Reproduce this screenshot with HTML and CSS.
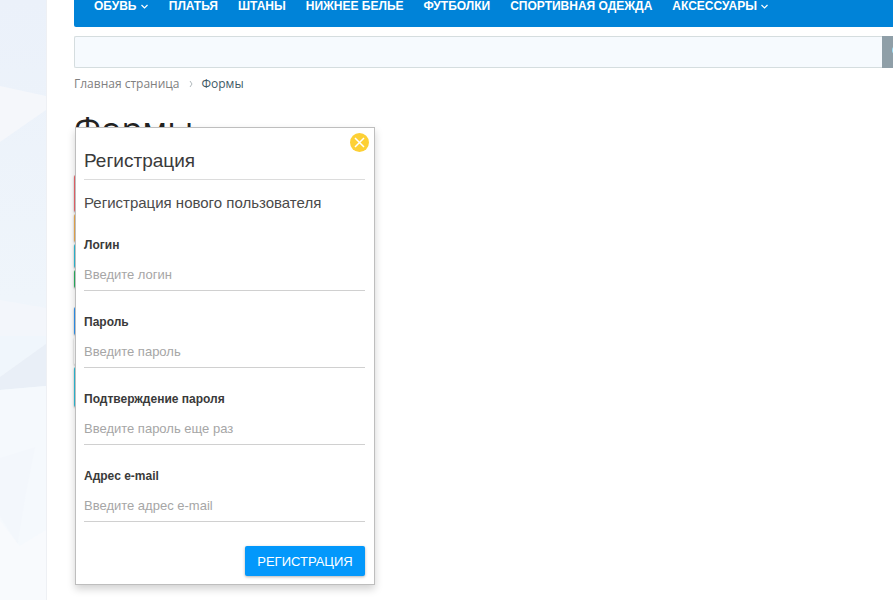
FILE: index.html
```
<!DOCTYPE html>
<html lang="ru">
<head>
    <meta charset="UTF-8">
    <meta name="viewport" content="width=device-width, initial-scale=1.0">
    <title>Формы</title>
    <link rel="stylesheet" href="styles.css">
</head>
<body>
    <div class="side">
        <svg class="side-bg" viewBox="0 0 47 600" preserveAspectRatio="none" aria-hidden="true">
            <defs>
                <linearGradient id="fade" x1="0" y1="0" x2="0" y2="1">
                    <stop offset="0" stop-color="#ebf1fa"/>
                    <stop offset="0.5" stop-color="#eff5fb"/>
                    <stop offset="1" stop-color="#f9fafd"/>
                </linearGradient>
            </defs>
            <rect width="47" height="600" fill="url(#fade)"/>
            <polygon points="0,86 47,96 47,110 0,142" fill="#f5f7fb"/>
            <polygon points="0,300 47,308 47,338 0,336" fill="#f3f6fb"/>
            <polygon points="0,336 47,336 47,344 0,376" fill="#f0f6fc"/>
            <polygon points="0,377 47,344 47,386 0,390" fill="#e9eff7"/>
            <polygon points="0,390 47,386 47,600 0,600" fill="#f5f9fd"/>
            <polygon points="0,458 36,447 26,496 18,544 0,516" fill="#f3f7fc"/>
            <polygon points="0,520 20,546 47,530 47,600 0,600" fill="#f8fafd"/>
        </svg>
    </div>
    <div class="page">
        <nav class="menu">
            <a href="#">ОБУВЬ <svg class="arrow" viewBox="0 0 8 6"><path d="M1 1l3 3 3-3"/></svg></a>
            <a href="#">ПЛАТЬЯ</a>
            <a href="#">ШТАНЫ</a>
            <a href="#">НИЖНЕЕ БЕЛЬЕ</a>
            <a href="#">ФУТБОЛКИ</a>
            <a href="#">СПОРТИВНАЯ ОДЕЖДА</a>
            <a href="#">АКСЕССУАРЫ <svg class="arrow" viewBox="0 0 8 6"><path d="M1 1l3 3 3-3"/></svg></a>
        </nav>
        <form class="search">
            <input type="text" aria-label="Поиск">
            <button type="button" aria-label="Найти">
                <svg viewBox="0 0 14 14"><circle cx="6" cy="6" r="5"/><path d="M10 10l3 3"/></svg>
            </button>
        </form>
        <div class="breadcrumbs">
            <a href="#">Главная страница</a>
            <svg class="crumb-arrow" viewBox="0 0 4 8"><path d="M1 1l2 3-2 3"/></svg>
            <span>Формы</span>
        </div>
        <main>
            <h1>Формы</h1>
            <div class="form-buttons">
                <button type="button" class="red" aria-label="Форма 1"></button>
                <button type="button" class="orange" aria-label="Форма 2"></button>
                <button type="button" class="teal" aria-label="Форма 3"></button>
                <button type="button" class="green" aria-label="Форма 4"></button>
                <button type="button" class="blue" aria-label="Форма 5"></button>
                <button type="button" class="white" aria-label="Форма 6"></button>
                <button type="button" class="teal large" aria-label="Форма 7"></button>
            </div>
        </main>

        <div class="modal" role="dialog" aria-labelledby="modal-title">
            <button type="button" class="close" aria-label="Закрыть">
                <svg viewBox="0 0 19 19"><path d="M5 5l9 9M14 5l-9 9"/></svg>
            </button>
            <h2 id="modal-title">Регистрация</h2>
            <p>Регистрация нового пользователя</p>
            <form>
                <div class="field">
                    <label for="login">Логин</label>
                    <input type="text" id="login" placeholder="Введите логин">
                </div>
                <div class="field">
                    <label for="password">Пароль</label>
                    <input type="password" id="password" placeholder="Введите пароль">
                </div>
                <div class="field">
                    <label for="confirm">Подтверждение пароля</label>
                    <input type="password" id="confirm" placeholder="Введите пароль еще раз">
                </div>
                <div class="field">
                    <label for="email">Адрес e-mail</label>
                    <input type="email" id="email" placeholder="Введите адрес e-mail">
                </div>
                <button type="submit" class="submit">РЕГИСТРАЦИЯ</button>
            </form>
        </div>
    </div>
</body>
</html>
```
FILE: styles.css
```
* {
    box-sizing: border-box;
}

body {
    margin: 0;
    display: flex;
    min-height: 100vh;
    overflow-x: hidden;
    background: #fff;
    font-family: "Open Sans", sans-serif;
}

a {
    text-decoration: none;
}

button {
    border: none;
    padding: 0;
    cursor: pointer;
}

svg {
    fill: none;
    stroke: currentColor;
}

.side {
    flex: 0 0 47px;
    border-right: 1px solid #eef0f4;
}

.side-bg {
    display: block;
    width: 100%;
    height: 100%;
    stroke: none;
}

.page {
    position: relative;
    flex: 1;
    min-width: 0;
    padding-left: 27px;
}

/* Top menu */
.menu {
    display: flex;
    gap: 20px;
    padding: 0 20px 15px;
    background: #0083d8;
    border-radius: 0 0 0 2px;
    white-space: nowrap;
}

.menu a {
    color: #fff;
    font-family: "Liberation Sans", sans-serif;
    font-size: 12px;
    font-weight: 700;
    line-height: 12px;
}

.arrow {
    width: 9px;
    height: 6px;
    stroke-width: 1.2;
}

/* Search */
.search {
    display: flex;
    height: 32px;
    margin-top: 9px;
    overflow: hidden;
}

.search input {
    flex: 1;
    min-width: 0;
    border: 1px solid #d5dddf;
    border-right: none;
    border-radius: 2px 0 0 2px;
    background: #f6fafe;
}

.search button {
    flex: 0 0 32px;
    margin-right: -21px;
    background: #8f9fa8;
    color: #9fe2fa;
}

.search svg {
    width: 12px;
    height: 12px;
    stroke-width: 2;
}

/* Breadcrumbs */
.breadcrumbs {
    display: flex;
    align-items: center;
    gap: 9px;
    margin-top: 6px;
    font-size: 12px;
    line-height: 20px;
    color: #3f5a66;
}

.breadcrumbs a {
    color: #808080;
}

.crumb-arrow {
    width: 4px;
    height: 8px;
    color: #b0b8bc;
}

h1 {
    margin: 11px 0 0;
    font-size: 34px;
    font-weight: 400;
    line-height: 48px;
    color: #222;
}

/* Buttons that open the forms */
.form-buttons {
    display: flex;
    flex-direction: column;
    align-items: flex-start;
    gap: 2px;
    margin-top: 22px;
}

.form-buttons button {
    width: 140px;
    height: 28px;
    border-radius: 2px;
    box-shadow: 0 1px 2px rgba(0, 0, 0, 0.3);
}

.form-buttons .red {
    height: 37px;
    background: #f0666c;
}

.form-buttons .orange {
    background: #f0ad4e;
}

.form-buttons .teal {
    height: 24px;
    background: #2bbfd9;
}

.form-buttons .green {
    height: 18px;
    background: #28b463;
}

.form-buttons .blue {
    margin-top: 17px;
    background: #2f96f3;
}

.form-buttons .white {
    background: #fff;
}

.form-buttons .large {
    height: 40px;
}

/* Registration window */
.modal {
    position: absolute;
    top: 127px;
    left: 28px;
    width: 300px;
    padding: 21px 9px 8px 8px;
    border: 1px solid #bebebe;
    background: #fff;
    box-shadow: 0 4px 8px rgba(0, 0, 0, 0.18);
    font-family: "Liberation Sans", Arial, sans-serif;
    color: #3a3a3a;
}

.close {
    position: absolute;
    top: 5px;
    right: 5px;
    width: 19px;
    height: 19px;
    border-radius: 50%;
    background: #fdd035;
    color: #fff;
}

.close svg {
    display: block;
    width: 19px;
    height: 19px;
    stroke-width: 1.5;
}

.modal h2 {
    margin: 0;
    padding-bottom: 6px;
    border-bottom: 1px solid #dcdcdc;
    font-size: 19px;
    font-weight: 400;
    line-height: 24px;
}

.modal p {
    margin: 11px 0 20px;
    font-size: 15px;
    line-height: 24px;
    color: #4a4a4a;
}

.field {
    margin-bottom: 21px;
}

.field label {
    display: block;
    font-size: 12px;
    font-weight: 700;
    line-height: 20px;
}

.field input {
    display: block;
    width: 100%;
    height: 31px;
    margin-top: 5px;
    padding: 0 0 2px;
    border: none;
    border-bottom: 1px solid #d0d0d0;
    background: none;
    font-family: inherit;
    font-size: 13px;
}

.field input::placeholder {
    color: #a6a6a6;
}

.submit {
    display: block;
    width: 120px;
    height: 30px;
    margin: 24px 0 0 auto;
    border-radius: 2px;
    background: #0398fb;
    box-shadow: 0 1px 3px rgba(0, 0, 0, 0.3);
    color: #fff;
    font-family: inherit;
    font-size: 13px;
}
```
